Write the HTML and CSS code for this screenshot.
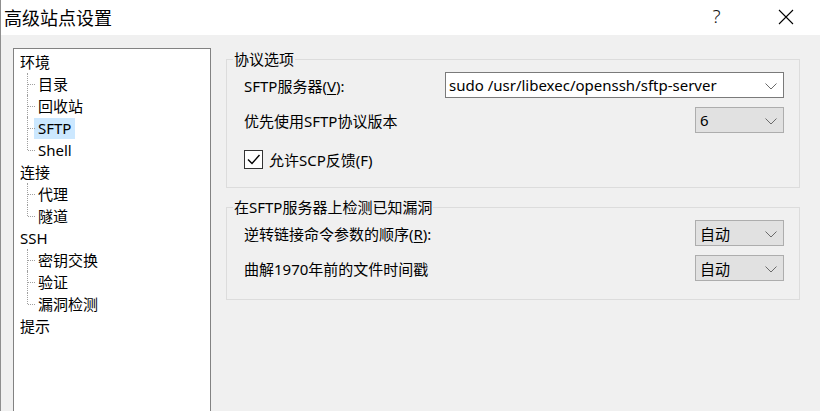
FILE: index.html
```html
<!DOCTYPE html>
<html lang="zh-CN">
<head>
<meta charset="utf-8">
<title>高级站点设置</title>
<link rel="stylesheet" href="styles.css">
</head>
<body>
<div class="window">
  <div class="titlebar">
    <div class="title">高级站点设置</div>
    <div class="tbtn help">?</div>
    <div class="tbtn close">
      <svg width="16" height="16" viewBox="0 0 16 16"><path d="M1 1 L15 15 M15 1 L1 15" stroke="#000" stroke-width="1.1" fill="none"/></svg>
    </div>
  </div>
  <div class="content">
    <div class="tree">
      <div class="node"><span class="lbl">环境</span></div>
      <div class="children">
        <div class="child"><span class="lbl">目录</span></div>
        <div class="child"><span class="lbl">回收站</span></div>
        <div class="child"><span class="lbl sel">SFTP</span></div>
        <div class="child"><span class="lbl">Shell</span></div>
      </div>
      <div class="node"><span class="lbl">连接</span></div>
      <div class="children">
        <div class="child"><span class="lbl">代理</span></div>
        <div class="child"><span class="lbl">隧道</span></div>
      </div>
      <div class="node"><span class="lbl">SSH</span></div>
      <div class="children">
        <div class="child"><span class="lbl">密钥交换</span></div>
        <div class="child"><span class="lbl">验证</span></div>
        <div class="child"><span class="lbl">漏洞检测</span></div>
      </div>
      <div class="node"><span class="lbl">提示</span></div>
    </div>
    <div class="panel">
      <fieldset class="group g1">
        <legend>协议选项</legend>
        <div class="rows">
          <div class="row">
            <span class="label">SFTP服务器(<u>V</u>):</span>
            <div class="combo edit wide"><span class="val">sudo /usr/libexec/openssh/sftp-server</span><span class="chev"><svg width="12" height="7" viewBox="0 0 12 7"><path d="M0.5 0.5 L6 6 L11.5 0.5" stroke="#6a6a6a" stroke-width="1" fill="none"/></svg></span></div>
          </div>
          <div class="row">
            <span class="label">优先使用SFTP协议版本</span>
            <div class="combo btn narrow"><span class="val">6</span><span class="chev"><svg width="12" height="7" viewBox="0 0 12 7"><path d="M0.5 0.5 L6 6 L11.5 0.5" stroke="#6a6a6a" stroke-width="1" fill="none"/></svg></span></div>
          </div>
          <div class="row check-row">
            <span class="checkbox"><svg width="17" height="17" viewBox="0 0 17 17"><path d="M3 8.5 L7 12.5 L14.5 4" stroke="#000" stroke-width="1.4" fill="none"/></svg></span>
            <span class="label">允许SCP反馈(F)</span>
          </div>
        </div>
      </fieldset>
      <fieldset class="group g2">
        <legend>在SFTP服务器上检测已知漏洞</legend>
        <div class="rows">
          <div class="row">
            <span class="label">逆转链接命令参数的顺序(<u>R</u>):</span>
            <div class="combo btn narrow"><span class="val">自动</span><span class="chev"><svg width="12" height="7" viewBox="0 0 12 7"><path d="M0.5 0.5 L6 6 L11.5 0.5" stroke="#6a6a6a" stroke-width="1" fill="none"/></svg></span></div>
          </div>
          <div class="row">
            <span class="label">曲解1970年前的文件时间戳</span>
            <div class="combo btn narrow"><span class="val">自动</span><span class="chev"><svg width="12" height="7" viewBox="0 0 12 7"><path d="M0.5 0.5 L6 6 L11.5 0.5" stroke="#6a6a6a" stroke-width="1" fill="none"/></svg></span></div>
          </div>
        </div>
      </fieldset>
    </div>
  </div>
</div>
</body>
</html>
```
FILE: styles.css
```css
* { box-sizing: border-box; }
html, body {
  margin: 0;
  padding: 0;
  width: 820px;
  height: 411px;
  overflow: hidden;
}
body {
  font-family: "Noto Sans", "Noto Sans CJK SC", sans-serif;
  font-size: 15px;
  color: #000;
  background: #f0f0f0;
}
.window {
  width: 820px;
  height: 411px;
  border-left: 1px solid #8f8f8f;
  display: flex;
  flex-direction: column;
  background: #f0f0f0;
}
.titlebar {
  height: 35px;
  background: #fff;
  display: flex;
  align-items: center;
  flex: none;
}
.title {
  flex: 1;
  font-family: "Noto Sans CJK SC", sans-serif;
  font-size: 18px;
  padding-left: 3px;
  padding-bottom: 1px;
}
.tbtn {
  width: 69px;
  height: 35px;
  display: flex;
  align-items: center;
  justify-content: center;
}
.help {
  font-family: "Noto Sans", sans-serif;
  font-size: 19px;
  font-weight: 300;
  color: #111;
  padding-bottom: 3px;
}
.close { padding-bottom: 2px; }
.content {
  flex: 1;
  display: flex;
  align-items: flex-start;
  padding: 13px 0 0 12px;
}
.tree {
  width: 198px;
  height: 380px;
  background: #fff;
  border: 1px solid #828282;
  padding: 2px 0 0 3px;
  flex: none;
}
.node, .child {
  height: 22px;
  display: flex;
  align-items: center;
}
.lbl {
  display: inline-block;
  height: 21px;
  line-height: 21px;
  padding: 0 3px;
  white-space: nowrap;
  font-family: "Noto Sans", "Noto Sans CJK SC", sans-serif;
}
.children { padding-left: 10px; }
.child {
  position: relative;
  padding-left: 8px;
}
.child::before {
  content: "";
  position: absolute;
  left: 0;
  top: 0;
  height: 100%;
  border-left: 1px dotted #a0a0a0;
}
.child:last-child::before { height: 11px; }
.child::after {
  content: "";
  position: absolute;
  left: 1px;
  top: 11px;
  width: 7px;
  border-top: 1px dotted #a0a0a0;
}
.lbl.sel { background: #cce8ff; padding: 0 4px; margin-left: -1px; }
.panel {
  margin-left: 15px;
  width: 574px;
  display: flex;
  flex-direction: column;
}
.group {
  margin: 0;
  border: 1px solid #dcdcdc;
  padding: 3px 15px 15px 6px;
  min-width: 0;
}
.group legend {
  padding: 0 1px;
  height: 20px;
  line-height: 20px;
  font-family: "Noto Sans", "Noto Sans CJK SC", sans-serif;
}
.g1 { margin-top: 1px; }
.g2 { margin-top: 9px; padding-bottom: 18px; }
.rows {
  display: flex;
  flex-direction: column;
  gap: 9px;
  padding-left: 11px;
}
.row {
  display: flex;
  align-items: center;
  height: 26px;
}
.check-row { margin-top: 4px; gap: 6px; }
.label {
  flex: 1;
  white-space: nowrap;
}
.check-row .label { flex: none; }
.combo {
  height: 26px;
  display: flex;
  align-items: center;
  flex: none;
}
.combo .val { flex: 1; white-space: nowrap; padding-left: 3px; }
.combo .chev {
  width: 26px;
  display: flex;
  align-items: center;
  justify-content: center;
  padding-top: 2px;
  padding-left: 2px;
}
.edit { background: #fff; border: 1px solid #7a7a7a; }
.btn { background: #e1e1e1; border: 1px solid #adadad; }
.wide { width: 339px; }
.narrow { width: 89px; }
.narrow .val { padding-left: 4px; }
.checkbox {
  width: 19px;
  height: 19px;
  border: 1px solid #333;
  background: #fff;
  display: flex;
  align-items: center;
  justify-content: center;
}
u { text-decoration: underline; text-underline-offset: 2px; }
```
